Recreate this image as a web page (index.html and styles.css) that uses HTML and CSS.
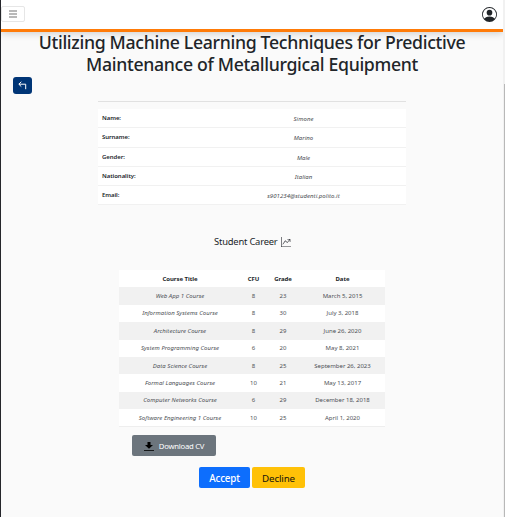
FILE: index.html
```html
<!DOCTYPE html>
<html lang="en">
<head>
<meta charset="utf-8">
<title>Student Application</title>
<link rel="stylesheet" href="styles.css">
</head>
<body>
<div class="page">
  <header class="navbar">
    <button class="menu" aria-label="Menu"><span></span><span></span><span></span></button>
    <svg class="avatar" viewBox="0 0 16 16"><path d="M11 6a3 3 0 1 1-6 0 3 3 0 0 1 6 0"/><path fill-rule="evenodd" d="M0 8a8 8 0 1 1 16 0A8 8 0 0 1 0 8m8-7a7 7 0 0 0-5.468 11.37C3.242 11.226 4.805 10 8 10s4.757 1.225 5.468 2.37A7 7 0 0 0 8 1"/></svg>
  </header>
  <main>
    <h1>Utilizing Machine Learning Techniques for Predictive<br>Maintenance of Metallurgical Equipment</h1>
    <button class="back" aria-label="Back"><svg viewBox="0 0 9 9"><path d="M3.3.8.8 3.2l2.5 2.4M1 3.2h6.7v5" fill="none" stroke="#fff" stroke-width="1"/></svg></button>
    <hr>
    <dl class="info">
      <div><dt>Name:</dt><dd>Simone</dd></div>
      <div><dt>Surname:</dt><dd>Marino</dd></div>
      <div><dt>Gender:</dt><dd>Male</dd></div>
      <div><dt>Nationality:</dt><dd>Italian</dd></div>
      <div><dt>Email:</dt><dd>s901234@studenti.polito.it</dd></div>
    </dl>
    <h2>Student Career <svg viewBox="0 0 16 16"><path fill-rule="evenodd" d="M0 0h1v15h15v1H0zm10 3.5a.5.5 0 0 1 .5-.5h4a.5.5 0 0 1 .5.5v4a.5.5 0 0 1-1 0V4.9l-3.613 4.417a.5.5 0 0 1-.74.037L7.06 6.767l-3.656 5.027a.5.5 0 0 1-.808-.588l4-5.5a.5.5 0 0 1 .758-.06l2.609 2.61L13.445 4H10.5a.5.5 0 0 1-.5-.5"/></svg></h2>
    <table class="career">
      <colgroup><col class="c1"><col class="c2"><col class="c3"><col class="c4"></colgroup>
      <thead><tr><th>Course Title</th><th>CFU</th><th>Grade</th><th>Date</th></tr></thead>
      <tbody>
        <tr><td>Web App 1 Course</td><td>8</td><td>23</td><td>March 5, 2015</td></tr>
        <tr><td>Information Systems Course</td><td>8</td><td>30</td><td>July 3, 2018</td></tr>
        <tr><td>Architecture Course</td><td>8</td><td>29</td><td>June 26, 2020</td></tr>
        <tr><td>System Programming Course</td><td>6</td><td>20</td><td>May 8, 2021</td></tr>
        <tr><td>Data Science Course</td><td>8</td><td>25</td><td>September 26, 2023</td></tr>
        <tr><td>Formal Languages Course</td><td>10</td><td>21</td><td>May 13, 2017</td></tr>
        <tr><td>Computer Networks Course</td><td>6</td><td>29</td><td>December 18, 2018</td></tr>
        <tr><td>Software Engineering 1 Course</td><td>10</td><td>25</td><td>April 1, 2020</td></tr>
      </tbody>
    </table>
    <button class="download"><svg viewBox="0 0 10 10"><path d="M3.5 1h3v3H9L5 7.8 1 4h2.5z"/><path d="M0 9h10v.8H0z"/></svg>Download CV</button>
    <div class="actions"><button class="accept">Accept</button><button class="decline">Decline</button></div>
  </main>
  <div class="scrollbar"><div class="thumb"></div></div>
</div>
</body>
</html>
```
FILE: styles.css
```css
* { box-sizing: border-box; }
body { margin: 0; font-family: "Noto Sans", "Open Sans", sans-serif; color: #212529; overflow: hidden; }
button { font-family: inherit; margin: 0; padding: 0; border: 0; }
.page { position: relative; height: 517px; background: #fafafa; border-left: 1px solid #25262b; overflow: hidden; }
.navbar { position: relative; display: flex; justify-content: space-between; height: 32px; margin-right: 2px; padding: 6px 6px 0 0; background: #fff; border-bottom: 3px solid #ff7b08; box-shadow: 0 2px 7px rgba(0,0,0,.16); }
.menu { display: flex; flex-direction: column; align-items: center; justify-content: center; gap: 1px; width: 24px; height: 16px; background: #fff; border: 1px solid #e6e6e6; border-radius: 2px; }
.menu span { width: 8px; height: 2px; background: #b9b9b9; }
.avatar { width: 15px; height: 15px; margin-top: 1px; fill: #212529; }
main { display: flex; flex-direction: column; align-items: flex-start; width: 502px; }
h1 { align-self: center; margin: -1px 0 0; font-size: 17.7px; line-height: 22px; font-weight: 500; letter-spacing: -.32px; text-align: center; white-space: nowrap; }
.back { display: flex; align-items: center; justify-content: center; width: 19px; height: 17px; margin: 2px 0 0 12px; border-radius: 3px; background: #003576; }
.back svg { width: 9px; height: 9px; }
hr { width: 308px; margin: 7px 0 0 97px; border: 0; border-top: 1px solid #e1e1e1; }
.info { width: 308px; margin: 7px 0 0 97px; font-size: 6px; }
.info div { display: flex; height: 19.3px; padding: 0 0 0 4px; background: #fff; border-bottom: 1px solid #f1f1f1; line-height: 18px; }
.info dt { width: 99px; font-weight: 600; letter-spacing: -.05px; }
.info dd { flex: 1; margin: 1px 0 0; text-align: center; font-style: italic; color: #484b50; letter-spacing: .06px; }
h2 { display: flex; align-items: center; gap: 3px; margin: 28.5px 0 0 213px; height: 15px; font-size: 9.4px; font-weight: 400; letter-spacing: -.2px; white-space: nowrap; }
h2 svg { width: 10px; height: 10px; margin-top: 1px; fill: #303238; }
.career { width: 266px; margin: 21px 0 0 118px; table-layout: fixed; border-collapse: collapse; font-size: 6px; text-align: center; background: #fff; border-bottom: 1px solid #eee; }
.c1 { width: 122px; } .c2 { width: 25px; } .c3 { width: 34px; } .c4 { width: 85px; }
.career th, .career td { height: 17.4px; padding: 0; line-height: 16px; white-space: nowrap; color: #4d5055; }
.career th { padding-top: 1px; color: #212529; font-weight: 700; letter-spacing: -.05px; }
.career td:first-child { font-style: italic; letter-spacing: .03px; }
.career tbody tr:nth-child(odd) { background: #f1f1f1; }
.download { display: flex; align-items: center; justify-content: center; gap: 5px; width: 84px; height: 21px; margin: 8px 0 0 131px; border-radius: 2px; background: #6c757d; color: #fff; font-size: 7.7px; letter-spacing: -.25px; }
.download svg { width: 10px; height: 10px; margin-top: 1px; }
.actions { display: flex; gap: 2px; margin: 11px 0 0 198px; }
.actions button { width: 51px; height: 21px; border-radius: 2px; font-size: 9.8px; padding-top: 1px; }
.actions .accept { background: #0d6efd; color: #fff; font-weight: 500; letter-spacing: -.15px; }
.actions .decline { width: 53px; background: #ffc107; color: #16140c; letter-spacing: -.15px; }
.scrollbar { position: absolute; top: 0; right: 0; width: 2px; height: 517px; background: #f1f1f1; }
.thumb { width: 1px; height: 433px; margin: 84px 0 0 1px; background: #b8b8b8; }
```
